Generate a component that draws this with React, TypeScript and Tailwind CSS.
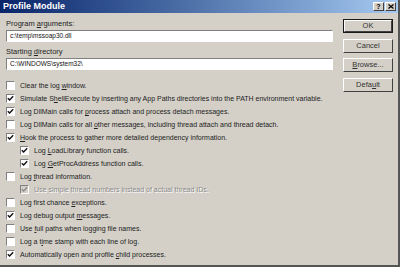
import React from 'react';

type Opt = {
  pre: string;
  key?: string;
  post: string;
  checked: boolean;
  indent?: boolean;
  disabled?: boolean;
};

const OPTIONS: Opt[] = [
  { pre: 'Clear the log ', key: 'w', post: 'indow.', checked: false },
  { pre: 'Simulate S', key: 'h', post: 'ellExecute by inserting any App Paths directories into the PATH environment variable.', checked: true },
  { pre: 'Log DllMain calls for ', key: 'p', post: 'rocess attach and process detach messages.', checked: true },
  { pre: 'Log DllMain calls for all ', key: 'o', post: 'ther messages, including thread attach and thread detach.', checked: false },
  { pre: '', key: 'H', post: 'ook the process to gather more detailed dependency information.', checked: true },
  { pre: 'Log ', key: 'L', post: 'oadLibrary function calls.', checked: true, indent: true },
  { pre: 'Log ', key: 'G', post: 'etProcAddress function calls.', checked: true, indent: true },
  { pre: 'Log ', key: 't', post: 'hread information.', checked: false },
  { pre: 'Use simple thread numbers instead of actual thread IDs.', post: '', checked: true, indent: true, disabled: true },
  { pre: 'Log first chance ', key: 'e', post: 'xceptions.', checked: false },
  { pre: 'Log debug output ', key: 'm', post: 'essages.', checked: true },
  { pre: 'Use ', key: 'f', post: 'ull paths when logging file names.', checked: false },
  { pre: 'Log a t', key: 'i', post: 'me stamp with each line of log.', checked: false },
  { pre: 'Automatically open and profile ', key: 'c', post: 'hild processes.', checked: true },
];

function CheckBox({ checked, disabled }: { checked: boolean; disabled?: boolean }) {
  return (
    <div
      className={
        'w-[9px] h-[9px] shrink-0 border border-t-[#808080] border-l-[#808080] border-b-white border-r-white flex items-center justify-center ' +
        (disabled ? 'bg-[#d4d0c8]' : 'bg-white')
      }
    >
      {checked && (
        <svg width="7" height="7" viewBox="0 0 7 7">
          <path d="M0.8 3.2 L2.6 5 L6.2 1.2" fill="none" stroke={disabled ? '#8a8a8a' : '#111'} strokeWidth="1.4" />
        </svg>
      )}
    </div>
  );
}

function Btn({ children, primary }: { children: React.ReactNode; primary?: boolean }) {
  return (
    <div className={'w-[50px] h-[14px] ' + (primary ? 'border border-[#1a1a1a]' : '')}>
      <div className="w-full h-full border border-t-white border-l-white border-b-[#404040] border-r-[#404040] bg-[#d4d0c8] flex items-center justify-center text-[7.5px] text-[#333] leading-none">
        {children}
      </div>
    </div>
  );
}

function Field({ value }: { value: string }) {
  return (
    <div className="w-[327px] h-[12px] border border-t-[#808080] border-l-[#808080] border-b-white border-r-white bg-white flex items-center pl-[3px] text-[6.5px] text-[#111] leading-none">
      {value}
    </div>
  );
}

export default function App() {
  return (
    <div
      className="w-[400px] h-[267px] bg-[#d4d0c8] border-r-[2px] border-b-[2px] border-[#555] overflow-hidden flex flex-col"
      style={{ fontFamily: '"Liberation Sans", Arial, sans-serif' }}
    >
      {/* Title bar */}
      <div className="h-[13px] shrink-0 bg-gradient-to-r from-[#0a246a] to-[#a6caf0] flex items-center pl-[3px] pr-[2px]">
        <span className="text-white font-bold text-[9px] leading-none">Profile Module</span>
        <div className="ml-auto flex gap-[1px]">
          <div className="w-[11px] h-[9px] bg-[#d4d0c8] border border-t-white border-l-white border-b-[#404040] border-r-[#404040] flex items-center justify-center text-[7px] font-bold leading-none text-black">?</div>
          <div className="w-[11px] h-[9px] bg-[#d4d0c8] border border-t-white border-l-white border-b-[#404040] border-r-[#404040] flex items-center justify-center">
            <svg width="6" height="5" viewBox="0 0 6 5">
              <path d="M0.5 0.5 L5.5 4.5 M5.5 0.5 L0.5 4.5" stroke="#000" strokeWidth="1.2" />
            </svg>
          </div>
        </div>
      </div>

      <div className="flex flex-1">
        {/* Left column */}
        <div className="pl-[6px] pt-[5px] w-[343px] text-[7px] text-[#222] leading-none">
          <div className="h-[12px] flex items-center text-[7.5px]">
            Program <span className="underline ml-[2px]">a</span>rguments:
          </div>
          <Field value="c:\temp\mssoap30.dll" />
          <div className="h-[13px] mt-[3px] flex items-center text-[7.5px]">
            Starting <span className="underline ml-[2px]">d</span>irectory
          </div>
          <Field value="C:\WINDOWS\system32\" />

          <div className="mt-[9px] flex flex-col">
            {OPTIONS.map((o, i) => (
              <div key={i} className={'h-[13px] flex items-center gap-[5px] ' + (o.indent ? 'pl-[14px]' : '')}>
                <CheckBox checked={o.checked} disabled={o.disabled} />
                <span
                  className={'whitespace-pre ' + (o.disabled ? 'text-[#8a8a8a] [text-shadow:1px_1px_0_#fff]' : '')}
                >
                  {o.pre}
                  {o.key && <span className="underline">{o.key}</span>}
                  {o.post}
                </span>
              </div>
            ))}
          </div>
        </div>

        {/* Right buttons */}
        <div className="pt-[6px] flex flex-col gap-[5px]">
          <Btn primary>OK</Btn>
          <div className="mt-[1px]">
            <Btn>Cancel</Btn>
          </div>
          <Btn>
            <span>
              <span className="underline">B</span>rowse...
            </span>
          </Btn>
          <div className="mt-[1px]">
            <Btn>
              <span>
                Defa<span className="underline">u</span>lt
              </span>
            </Btn>
          </div>
        </div>
      </div>
    </div>
  );
}
